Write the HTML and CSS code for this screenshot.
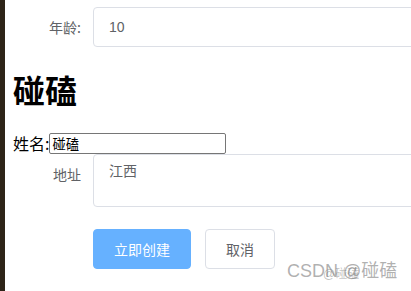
FILE: index.html
```html
<!DOCTYPE html>
<html lang="zh">
<head>
<meta charset="utf-8">
<link rel="stylesheet" href="styles.css">
</head>
<body>
<div class="page">
  <div class="strip"></div>
  <div class="content">
    <div class="form-item">
      <label class="form-label">年龄:</label>
      <div class="form-control"><input class="el-input" type="text" value="10"></div>
    </div>
    <h1 class="title">碰磕</h1>
    <div class="name-row">
      <span class="name-label">姓名:</span><input class="plain-input" type="text" value="碰磕">
    </div>
    <div class="form-item">
      <label class="form-label">地址</label>
      <div class="form-control"><textarea class="el-textarea" rows="2">江西</textarea></div>
    </div>
    <div class="actions">
      <button class="btn btn-primary">立即创建</button>
      <button class="btn">取消</button>
    </div>
  </div>
  <div class="watermark">CSDN @碰磕<span class="watermark-sub">@碰磕</span></div>
</div>
</body>
</html>
```

FILE: styles.css
```css
html, body {
  margin: 0;
  padding: 0;
  background: #ffffff;
  overflow: hidden;
}
body {
  font-family: "Noto Sans CJK SC", "Noto Sans", sans-serif;
  width: 411px;
  height: 291px;
}
.page {
  display: flex;
  height: 291px;
  position: relative;
}
.strip {
  width: 5px;
  flex: 0 0 5px;
  background: #2e2418;
}
.content {
  flex: 0 0 420px;
  padding: 7px 0 0 8px;
  box-sizing: border-box;
}
.form-item {
  display: flex;
  margin-bottom: 22px;
}
.form-label {
  width: 80px;
  flex: 0 0 80px;
  box-sizing: border-box;
  padding-right: 12px;
  text-align: right;
  line-height: 40px;
  font-size: 14px;
  color: #606266;
}
.form-control {
  flex: 1;
}
.el-input {
  display: block;
  width: 100%;
  height: 40px;
  box-sizing: border-box;
  border: 1px solid #dcdfe6;
  border-radius: 4px;
  padding: 0 15px;
  font-family: "Liberation Sans", "Noto Sans CJK SC", sans-serif;
  font-size: 14px;
  color: #606266;
  outline: none;
}
.title {
  margin: 5px 0 24px;
  font-size: 32px;
  line-height: 40px;
  font-weight: bold;
  color: #000;
}
.name-row {
  display: flex;
  align-items: center;
  height: 21px;
  font-size: 16px;
  color: #000;
}
.name-label {
  line-height: 21px;
}
.plain-input {
  width: 177px;
  height: 21px;
  box-sizing: border-box;
  border: 1px solid #767676;
  border-radius: 2px;
  padding: 1px 2px;
  margin: 0;
  font-family: "Noto Sans CJK SC", sans-serif;
  font-size: 13.33px;
  line-height: 17px;
  color: #000;
  outline: none;
}
.el-textarea {
  display: block;
  width: 100%;
  height: 53px;
  box-sizing: border-box;
  border: 1px solid #dcdfe6;
  border-radius: 4px;
  padding: 5px 15px;
  font-family: "Noto Sans CJK SC", sans-serif;
  font-size: 14px;
  line-height: 1.5;
  color: #606266;
  resize: none;
  outline: none;
  margin: 0;
}
.actions {
  display: flex;
  gap: 14px;
  margin-left: 80px;
}
.btn {
  height: 40px;
  box-sizing: border-box;
  padding: 0 20px;
  border: 1px solid #dcdfe6;
  border-radius: 4px;
  background: #fff;
  color: #606266;
  font-family: "Noto Sans CJK SC", sans-serif;
  font-size: 14px;
  line-height: 1;
  cursor: pointer;
}
.btn-primary {
  background: #66b1ff;
  border-color: #66b1ff;
  color: #fff;
}
.watermark {
  position: absolute;
  left: 287px;
  top: 259px;
  font-family: "Liberation Sans", "Noto Sans CJK SC", sans-serif;
  font-size: 18px;
  line-height: 24px;
  color: rgba(110, 110, 110, 0.55);
  white-space: nowrap;
}
.watermark-sub {
  position: absolute;
  left: 36px;
  top: 8px;
  font-size: 12px;
  line-height: 15px;
  color: rgba(120, 120, 120, 0.45);
}
```
